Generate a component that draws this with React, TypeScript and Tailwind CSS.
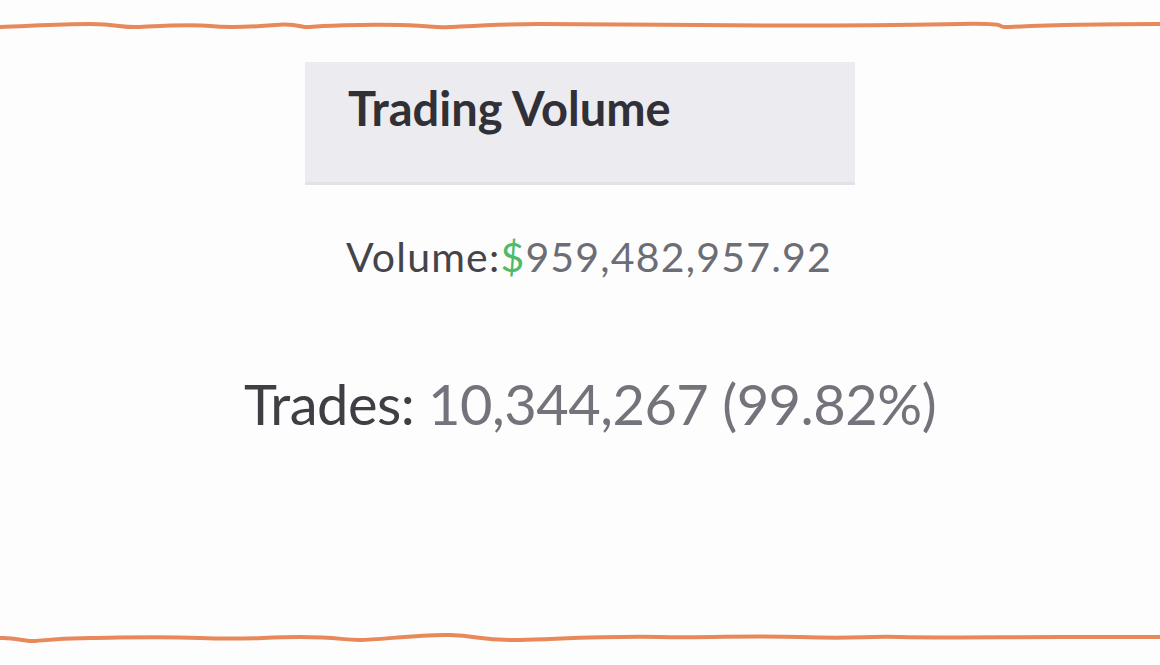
const font = { fontFamily: '"Lato", "Liberation Sans", sans-serif' };

function WavyLine({ d }: { d: string }) {
  return (
    <svg className="block w-full h-[20px]" viewBox="0 0 1160 20" preserveAspectRatio="none" fill="none">
      <path d={d} stroke="#e8895c" strokeWidth={4} strokeLinecap="round" strokeLinejoin="round" />
    </svg>
  );
}

const topLine =
  'M0 12 C30 11 60 9 90 9 S120 13 140 12 S190 9 210 11 S250 12 275 10 S300 13 310 12 S360 9 400 10 S430 13 450 12 S500 9 540 9 S620 9 700 10 S900 10 960 9 S990 13 1010 12 S1100 9 1160 9';

const bottomLine =
  'M0 11 C15 10 25 15 35 14 S60 11 90 11 S150 9 200 11 S260 10 300 10 S340 13 360 13 S420 7 450 8 S480 14 520 13 S600 9 660 10 S740 8 800 10 S860 9 900 10 S1000 10 1060 10 S1120 10 1160 10';

export default function App() {
  return (
    <div className="w-[1160px] h-[665px] bg-[#fdfdfd] flex flex-col overflow-hidden" style={font}>
      <div className="pt-[15px]">
        <WavyLine d={topLine} />
      </div>

      <div className="flex-1 flex flex-col items-center">
        <div className="mt-[27px] w-[550px] h-[123px] bg-[#ebebf0] border-b-[3px] border-[#e1e1e7] pl-[43px] pt-[23px]">
          <h2 className="text-[47px] font-bold leading-none text-[#303036]">Trading Volume</h2>
        </div>

        <p className="mt-[51px] pl-[18px] text-[41px] leading-none text-[#44444a] tracking-[1.2px]">
          Volume:<span className="text-[#4dbb6b]">$</span>
          <span className="text-[#6d6d75]">959,482,957.92</span>
        </p>

        <p className="mt-[99px] pl-[20px] text-[56px] leading-none text-[#3e3e44] tracking-[-0.5px]">
          Trades: <span className="text-[#73737b]">10,344,267 (99.82%)</span>
        </p>
      </div>

      <div className="pb-[18px]">
        <WavyLine d={bottomLine} />
      </div>
    </div>
  );
}
